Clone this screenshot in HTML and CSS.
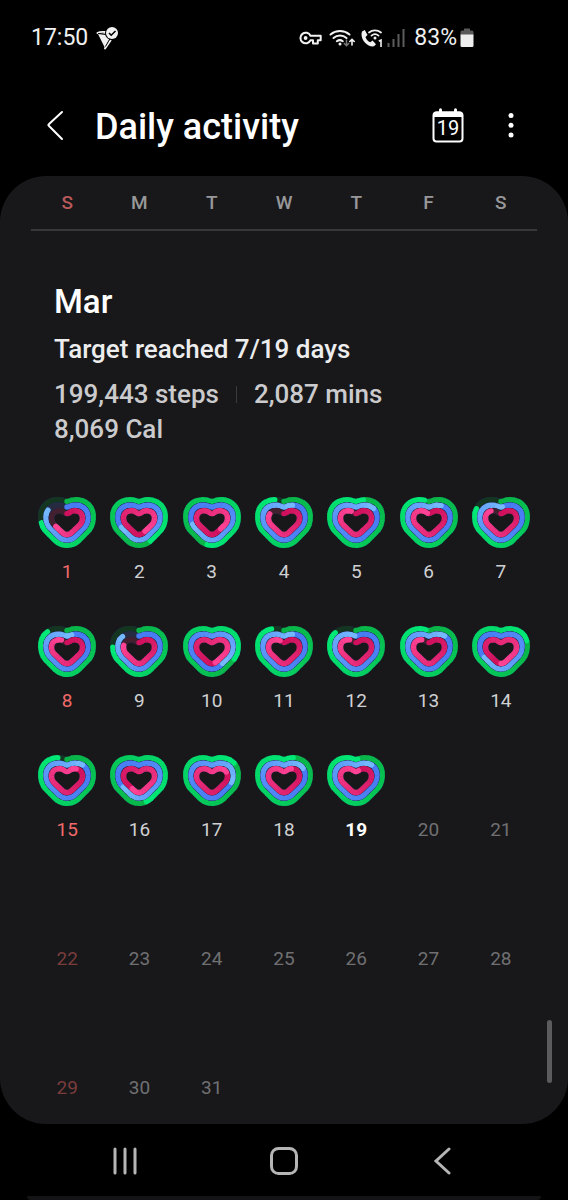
FILE: index.html
```html
<!DOCTYPE html>
<html lang="en">
<head>
<meta charset="utf-8">
<meta name="viewport" content="width=device-width, initial-scale=1">
<title>Daily activity</title>
<link rel="stylesheet" href="styles.css">
</head>
<body>
<div class="status">
  <span class="status-time">17:50</span>
  <svg class="status-plane" width="24" height="24" viewBox="0 0 24 24" aria-hidden="true">
    <path d="M1.500 7 Q4 5.500 9 6M9 22.500l5.500-8" fill="none" stroke="#f2f2f2" stroke-width="2" stroke-linecap="round"/>
    <path d="M2 8l7 14 5-9-4-6z" fill="#f2f2f2"/>
    <path d="M2 7.500l8 1M9.500 20.500l4.500-8" stroke="#000" stroke-width="1"/>
    <circle cx="16" cy="7" r="7" fill="#000"/>
    <circle cx="16" cy="7" r="6" fill="#f2f2f2"/>
    <path d="M13 7l2.200 2.200L19.500 5" fill="none" stroke="#000" stroke-width="1.600"/>
  </svg>
  <div class="status-right">
    <svg width="23" height="14" viewBox="0 0 23 14" aria-hidden="true">
      <path d="M11.500 4.700A5.300 5.300 0 1 0 11.500 9.300H14v3.200h4.800V9.300h2.900V4.700z" fill="none" stroke="#f2f2f2" stroke-width="2" stroke-linejoin="round"/>
      <circle cx="6.600" cy="7" r="1.900" fill="#f2f2f2"/>
    </svg>
    <svg class="status-wifi" width="26" height="20" viewBox="0 0 26 20" aria-hidden="true">
      <g fill="none" stroke="#f2f2f2" stroke-width="2" stroke-linecap="round">
        <path d="M1.500 6.500a15 15 0 0 1 19 0M4.500 10a10 10 0 0 1 13 0M7.800 13.200a5.200 5.200 0 0 1 6 0"/>
        <path d="M23 17v-5.500M20.800 13.500 23 11.300l2.200 2.200" stroke-width="1.600"/>
        <path d="M17.500 12v5.500M15.300 15.500l2.200 2.200 2.200-2.200" stroke="#777" stroke-width="1.500"/>
      </g>
      <circle cx="11" cy="16" r="1.500" fill="#f2f2f2"/>
    </svg>
    <svg class="status-call" width="23" height="20" viewBox="0 0 23 20" aria-hidden="true">
      <path d="M2 3.500 4.800 2l2.700 5-2 2c.8 2.400 2.500 4.300 4.800 5.300l2.200-1.700 3.500 3.700-2 2C7.500 19.500-.5 11 2 3.500z" fill="#f2f2f2"/>
      <path d="M9 4.500a9.500 9.500 0 0 1 12 0M11.500 7.600a5.500 5.500 0 0 1 7 0" fill="none" stroke="#f2f2f2" stroke-width="1.800" stroke-linecap="round"/>
      <circle cx="15" cy="10" r="1.500" fill="#f2f2f2"/>
      <path d="M18.800 13.200 21 12v7" fill="none" stroke="#f2f2f2" stroke-width="1.600"/>
    </svg>
    <svg class="status-signal" width="18" height="18" viewBox="0 0 18 18" aria-hidden="true">
      <path d="M1.500 14v4M6.500 10v8M11.500 5v13M16.500 0v18" stroke="#5c5c5c" stroke-width="2"/>
    </svg>
    <span class="status-battery">83%</span>
    <svg width="14" height="20" viewBox="0 0 14 20" aria-hidden="true">
      <path d="M.5 7V4q0-1.500 1.500-1.500h2V.5h6v2h2q1.500 0 1.500 1.500v3z" fill="#5a5a5a"/>
      <path d="M.5 6.500h13v11q0 1.500-1.500 1.500H2q-1.500 0-1.500-1.500z" fill="#eee"/>
    </svg>
  </div>
</div>

<header class="bar">
  <button class="bar-button" aria-label="Back">
    <svg width="20" height="32" viewBox="0 0 20 32" aria-hidden="true"><path d="M17 2 3.800 14.300q-.8.700 0 1.400L17 29" fill="none" stroke="#fff" stroke-width="2" stroke-linecap="round"/></svg>
  </button>
  <h1 class="bar-title">Daily activity</h1>
  <button class="bar-button" aria-label="Go to today">
    <svg width="32" height="36" viewBox="0 0 32 36" aria-hidden="true">
      <path d="M8.500 1.800v4M23.500 1.800v4" stroke="#fff" stroke-width="3" stroke-linecap="round"/>
      <rect x="1.500" y="4.500" width="29" height="29" rx="3" fill="none" stroke="#fff" stroke-width="2"/>
      <path d="M1.500 9V6.500q0-3 3-3h23q3 0 3 3V9z" fill="#fff"/>
      <text x="16" y="27" class="bar-day">19</text>
    </svg>
  </button>
  <button class="bar-button" aria-label="More options">
    <svg width="6" height="26" viewBox="0 0 6 26" aria-hidden="true"><g fill="#fff"><circle cx="3" cy="2.500" r="2.500"/><circle cx="3" cy="12.300" r="2.500"/><circle cx="3" cy="22" r="2.500"/></g></svg>
  </button>
</header>

<main class="panel">
  <div class="weekdays">
    <span class="sun">S</span><span>M</span><span>T</span><span>W</span><span>T</span><span>F</span><span>S</span>
  </div>
  <section class="summary">
    <h2 class="month">Mar</h2>
    <p class="target">Target reached 7/19 days</p>
    <ul class="totals">
      <li>199,443 steps</li>
      <li class="split">2,087 mins</li>
      <li class="wide">8,069 Cal</li>
    </ul>
  </section>
  <table class="days">
    <tbody>
      <tr>
        <td><svg class="heart" data-rings="73 83 66"></svg>1</td>
        <td><svg class="heart" data-rings="142 168 142"></svg>2</td>
        <td><svg class="heart" data-rings="153 171 138"></svg>3</td>
        <td><svg class="heart" data-rings="94 107 82"></svg>4</td>
        <td><svg class="heart" data-rings="105 115 94"></svg>5</td>
        <td><svg class="heart" data-rings="97 110 98"></svg>6</td>
        <td><svg class="heart" data-rings="82 101 88"></svg>7</td>
      </tr>
      <tr>
        <td><svg class="heart" data-rings="87 104 93"></svg>8</td>
        <td><svg class="heart" data-rings="76 86 79"></svg>9</td>
        <td><svg class="heart" data-rings="132 140 146"></svg>10</td>
        <td><svg class="heart" data-rings="92 107 95"></svg>11</td>
        <td><svg class="heart" data-rings="86 99 92"></svg>12</td>
        <td><svg class="heart" data-rings="98 113 91"></svg>13</td>
        <td><svg class="heart" data-rings="120 167 150"></svg>14</td>
      </tr>
      <tr>
        <td><svg class="heart" data-rings="94 113 111"></svg>15</td>
        <td><svg class="heart" data-rings="145 166 159"></svg>16</td>
        <td><svg class="heart" data-rings="115 129 118"></svg>17</td>
        <td><svg class="heart" data-rings="106 117 109"></svg>18</td>
        <td class="today"><svg class="heart" data-rings="101 113 103"></svg>19</td>
        <td class="future">20</td>
        <td class="future">21</td>
      </tr>
      <tr>
        <td class="future">22</td><td class="future">23</td><td class="future">24</td><td class="future">25</td><td class="future">26</td><td class="future">27</td><td class="future">28</td>
      </tr>
      <tr>
        <td class="future">29</td><td class="future">30</td><td class="future">31</td><td></td><td></td><td></td><td></td>
      </tr>
    </tbody>
  </table>
  <div class="scrollbar"></div>
</main>

<nav class="nav">
  <button aria-label="Recent apps"><svg width="28" height="28" viewBox="0 0 28 28" aria-hidden="true"><path d="M4 2v24M14 2v24M24 2v24" stroke="#b5b5b5" stroke-width="3" stroke-linecap="round"/></svg></button>
  <button aria-label="Home"><svg width="28" height="28" viewBox="0 0 28 28" aria-hidden="true"><rect x="1.500" y="1.500" width="25" height="25" rx="7" fill="none" stroke="#b5b5b5" stroke-width="3"/></svg></button>
  <button aria-label="Back"><svg width="28" height="28" viewBox="0 0 28 28" aria-hidden="true"><path d="M20 2 7 14l13 12" fill="none" stroke="#b5b5b5" stroke-width="3" stroke-linecap="round"/></svg></button>
</nav>
<div class="edge"></div>
<script src="hearts.js"></script>
</body>
</html>
```
FILE: styles.css
```css
* { box-sizing: border-box; }

body {
  margin: 0;
  min-height: 100vh;
  display: flex;
  flex-direction: column;
  background: #000;
  color: #fff;
  font-family: Roboto, "Noto Sans", sans-serif;
}

h1, h2, p, ul { margin: 0; padding: 0; font-weight: 500; }
ul { list-style: none; }
svg { display: block; flex: none; }
button { margin: 0; padding: 0; border: 0; background: none; color: inherit; font: inherit; }

.status {
  display: flex;
  align-items: center;
  height: 75px;
  padding: 0 94px 0 31px;
  font-size: 23px;
  color: #f0f0f0;
}
.status-plane { margin-left: 8px; }
.status-right { display: flex; align-items: center; margin-left: auto; }
.status-wifi { margin-left: 7px; }
.status-call { margin-left: 5px; }
.status-signal { margin-left: 4px; }
.status-battery { margin: 0 3px 0 9px; }

.bar {
  display: flex;
  align-items: center;
  height: 101px;
  padding: 0 54px 0 45px;
}
.bar-title { flex: 1; margin-left: 30px; padding-top: 2px; font-size: 36px; line-height: 44px; }
.bar-button + .bar-button { margin-left: 44px; }
.bar-day { fill: #fff; font-size: 20px; text-anchor: middle; }

.panel {
  position: relative;
  flex: 1;
  padding: 0 31px;
  border-radius: 46px;
  background: #18181a;
}

.weekdays {
  display: grid;
  grid-template-columns: repeat(7, 1fr);
  padding: 15px 0 14px;
  border-bottom: 2px solid #38383a;
  color: #98989a;
  font-size: 19px;
  font-weight: 500;
  line-height: 24px;
  text-align: center;
}
.weekdays .sun { color: #b8595a; }

.summary { padding: 50px 23px; }
.month { font-size: 33px; line-height: 42px; }
.target { margin-top: 9px; color: #ededee; font-size: 26px; line-height: 34px; font-weight: 500; }
.totals {
  display: flex;
  flex-wrap: wrap;
  margin-top: 11px;
  color: #cbcbcd;
  font-size: 26px;
  line-height: 35px;
}
.split { display: flex; align-items: center; }
.split::before { content: ""; width: 1px; height: 17px; margin: 0 17px; background: #3a3a3c; }
.wide { flex-basis: 100%; }

.days {
  width: 100%;
  table-layout: fixed;
  border-collapse: collapse;
  color: #d0d0d2;
  font-size: 19px;
  line-height: 24px;
  text-align: center;
}
.days tr { height: 129px; }
.days tr:last-child { height: 111px; }
.days td { padding: 0; vertical-align: top; }
.days td:first-child { color: #f06a6a; }
.days .today { color: #fff; font-weight: 700; }
.days .future { padding-top: 63px; color: #707072; }
.days .future:first-child { color: #7a3c3d; }
.heart { width: 58px; height: 52px; margin: 0 auto 11px; }

.scrollbar {
  position: absolute;
  right: 16px;
  bottom: 41px;
  width: 5px;
  height: 63px;
  border-radius: 3px;
  background: #5b5b5d;
}

.nav {
  display: grid;
  grid-template-columns: repeat(3, 1fr);
  height: 72px;
  padding: 2px 45px 0;
}
.nav button { display: flex; align-items: center; justify-content: center; }
.edge { height: 4px; margin: 0 27px; border-radius: 0 0 20px 20px; background: #141416; }
```
FILE: hearts.js
```js
// Each ring: its heart outline, clockwise from the notch, then its stroke and colours.
const RINGS = [
  {
    path: "M29 4.400C32 4.400 33 2.800 38 2.800C48 2.800 55.200 9.500 55.200 19.500C55.200 25.500 53.500 30.500 50.500 33.700L41 43.300C37.500 46.800 33.500 48.200 29 48.200C24.500 48.200 20.500 46.800 17 43.300L7.500 33.700C4.500 30.500 2.800 25.500 2.800 19.500C2.800 9.500 10 2.800 20 2.800C25 2.800 26 4.400 29 4.400Z",
    width: 5.4, track: "#14351f", from: [10, 180, 72], to: [0, 232, 118], ease: 1
  },
  {
    path: "M29 10C32 10 33 8.200 37.500 8.200C45 8.200 50 13 50 20C50 24.800 48.600 28 46 30.800L37.800 39C35 41.800 32.500 42.900 29 42.900C25.500 42.900 23 41.800 20.200 39L12 30.800C9.400 28 8 24.800 8 20C8 13 13 8.200 20.500 8.200C25 8.200 26 10 29 10Z",
    width: 5.4, track: "#262b42", from: [72, 124, 245], to: [116, 184, 255], ease: 2
  },
  {
    path: "M29 16.600C31.500 16.600 32.500 13.700 36.500 13.700C41.500 13.700 44.500 17 44.500 21C44.500 24.200 43.400 26.200 41.300 28.300L34 35.300C32.300 36.900 31 37.500 29 37.500C27 37.500 25.700 36.900 24 35.300L16.700 28.300C14.600 26.200 13.500 24.200 13.500 21C13.500 17 16.500 13.700 21.500 13.700C25.500 13.700 26.500 16.600 29 16.600Z",
    width: 5.4, track: "#43202f", from: [208, 16, 92], to: [255, 66, 148], ease: 1
  }
];
const STEPS = 30;
const OVERLAP = 0.4;

function stroke(d, color, width, extra) {
  return `<path d="${d}" fill="none" stroke="${color}" stroke-width="${width}" pathLength="100" ${extra || ""}/>`;
}

function ring(spec, value) {
  let out = stroke(spec.path, "#1c2a50", spec.width + 0.6) + stroke(spec.path, spec.track, spec.width);
  const first = Math.max(0, value - 100);
  const size = (value - first) / STEPS;
  for (let i = 0; i < STEPS; i++) {
    const last = i === STEPS - 1;
    const mix = Math.pow(i / (STEPS - 1), spec.ease);
    const color = spec.from.map((c, k) => Math.round(c + (spec.to[k] - c) * mix));
    const round = last || (i === 0 && value < 100);
    const length = last ? size : size + OVERLAP;
    const offset = (first + i * size) % 100;
    out += stroke(spec.path, `rgb(${color})`, spec.width,
      `stroke-dasharray="${length} ${100 - length}" stroke-dashoffset="${-offset}" stroke-linecap="${round ? "round" : "butt"}"`);
  }
  return out;
}

document.querySelectorAll(".heart").forEach((svg) => {
  const values = svg.dataset.rings.split(" ").map(Number);
  svg.setAttribute("viewBox", "0 0 58 52");
  svg.setAttribute("aria-hidden", "true");
  svg.innerHTML = RINGS.map((spec, i) => ring(spec, values[i])).join("");
});
```
